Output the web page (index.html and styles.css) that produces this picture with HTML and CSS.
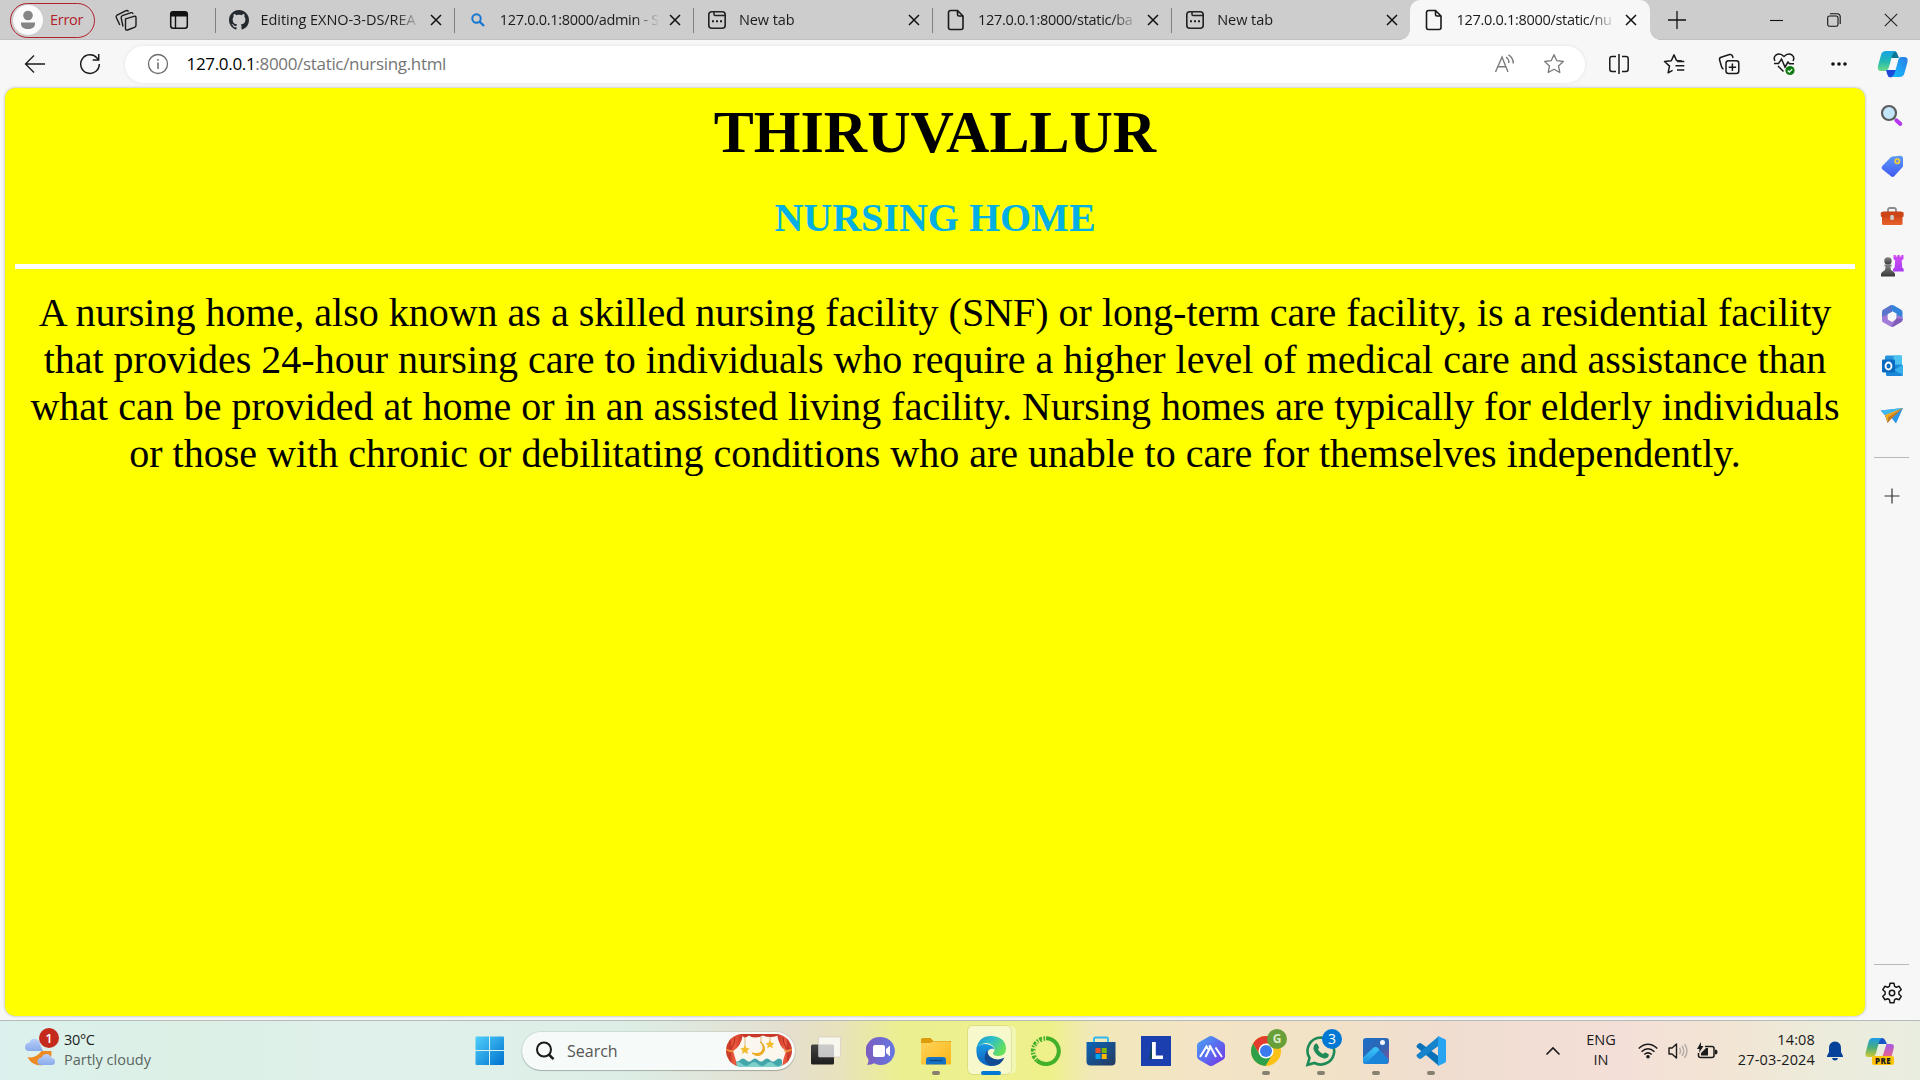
FILE: index.html
```html
<!DOCTYPE html>
<html lang="en">
<head>
<meta charset="utf-8">
<title>127.0.0.1:8000/static/nursing.html</title>
<link rel="stylesheet" href="styles.css">
</head>
<body>
<svg class="defs" width="0" height="0" aria-hidden="true">
  <defs>
    <linearGradient id="cpA" x1="0" y1="0" x2="0" y2="1"><stop offset="0" stop-color="#14a4e4"/><stop offset=".55" stop-color="#25b9b0"/><stop offset="1" stop-color="#6fdc86"/></linearGradient>
    <linearGradient id="cpB" x1="1" y1="0" x2="0" y2="1"><stop offset="0" stop-color="#2b7be0"/><stop offset=".5" stop-color="#1ea0f4"/><stop offset="1" stop-color="#15bdf8"/></linearGradient>
    <linearGradient id="cpC" x1="0" y1="0" x2="0" y2="1"><stop offset="0" stop-color="#1c9ae8"/><stop offset=".5" stop-color="#49ad7c"/><stop offset="1" stop-color="#d2ca32"/></linearGradient>
    <linearGradient id="cpD" x1="0" y1="0" x2="0" y2="1"><stop offset="0" stop-color="#a45ae8"/><stop offset="1" stop-color="#f4647c"/></linearGradient>
    <linearGradient id="tag" x1="0" y1="0" x2="0" y2="1"><stop offset="0" stop-color="#5d9df5"/><stop offset="1" stop-color="#4058f4"/></linearGradient>
    <linearGradient id="box" x1="0" y1="0" x2="0" y2="1"><stop offset="0" stop-color="#c8380c"/><stop offset="1" stop-color="#e8622c"/></linearGradient>
    <linearGradient id="pawn" x1="0" y1="0" x2="0" y2="1"><stop offset="0" stop-color="#858585"/><stop offset="1" stop-color="#383838"/></linearGradient>
    <linearGradient id="rook" x1="0" y1="0" x2="0" y2="1"><stop offset="0" stop-color="#d24cf4"/><stop offset="1" stop-color="#a83cf4"/></linearGradient>
    <linearGradient id="win" x1="0" y1="0" x2="1" y2="1"><stop offset="0" stop-color="#4fd0fb"/><stop offset="1" stop-color="#0071cf"/></linearGradient>
    <linearGradient id="chat" x1="0" y1="0" x2="1" y2="0"><stop offset="0" stop-color="#7d5cc0"/><stop offset="1" stop-color="#6478e0"/></linearGradient>
    <linearGradient id="fold" x1="0" y1="0" x2="1" y2="1"><stop offset="0" stop-color="#ffd45c"/><stop offset="1" stop-color="#fbb616"/></linearGradient>
    <linearGradient id="edgeT" x1="0" y1="0" x2="1" y2=".5"><stop offset="0" stop-color="#1a96d4"/><stop offset=".5" stop-color="#2fbfc8"/><stop offset="1" stop-color="#66e05a"/></linearGradient>
    <linearGradient id="edgeB" x1="0" y1="0" x2="0" y2="1"><stop offset="0" stop-color="#1c9be4"/><stop offset="1" stop-color="#0a62bc"/></linearGradient>
    <linearGradient id="store" x1="0" y1="0" x2="1" y2="1"><stop offset="0" stop-color="#0b65b8"/><stop offset="1" stop-color="#26395e"/></linearGradient>
    <linearGradient id="hex" x1="0" y1="0" x2="1" y2="1"><stop offset="0" stop-color="#4aa4f4"/><stop offset=".5" stop-color="#5a6cf0"/><stop offset="1" stop-color="#7a30e4"/></linearGradient>
    <linearGradient id="photo" x1="0" y1="0" x2="1" y2="1"><stop offset="0" stop-color="#1a70c8"/><stop offset=".6" stop-color="#3464b0"/><stop offset="1" stop-color="#9a4c98"/></linearGradient>
    <linearGradient id="photoM" x1="0" y1="0" x2="0" y2="1"><stop offset="0" stop-color="#3cc8f8"/><stop offset="1" stop-color="#1c8ce0"/></linearGradient>
    <linearGradient id="cloud" x1="0" y1="0" x2="0" y2="1"><stop offset="0" stop-color="#bcd0f8"/><stop offset="1" stop-color="#88aaec"/></linearGradient>
    <linearGradient id="curt" x1="0" y1="0" x2="1" y2="0"><stop offset="0" stop-color="#c83424"/><stop offset=".5" stop-color="#ec5a40"/><stop offset="1" stop-color="#c83424"/></linearGradient>
    <linearGradient id="tvD" x1="0" y1="0" x2="0" y2="1"><stop offset="0" stop-color="#444"/><stop offset="1" stop-color="#1d1d1d"/></linearGradient>
    <symbol id="close" viewBox="0 0 12 12"><path d="M1 1l10 10M11 1L1 11" fill="none" stroke="#111" stroke-width="1.5"/></symbol>
    <symbol id="page" viewBox="0 0 18 22"><path d="M3.5 1.5h7l5.500 5.500v11.500a2 2 0 0 1-2 2H3.500a2 2 0 0 1-2-2v-15a2 2 0 0 1 2-2zM10.500 1.500v4a1.500 1.500 0 0 0 1.500 1.500h4" fill="none" stroke="#1a1a1a" stroke-width="1.6"/></symbol>
    <symbol id="newtab" viewBox="0 0 20 20"><rect x="1.800" y="1.800" width="16.400" height="16.400" rx="3" fill="none" stroke="#222" stroke-width="1.600"/><path d="M7 2v2.500a1 1 0 0 0 1 1h10" fill="none" stroke="#222" stroke-width="1.500"/><path d="M5 10.200h2v2H5zM9 10.200h2v2H9zM13 10.200h2v2h-2z" fill="#222"/></symbol>
  </defs>
</svg>
<div class="screen">
  <header class="tabstrip">
    <div class="profile"><span class="avatar"><svg width="16" height="20" viewBox="0 0 16 20"><circle cx="8" cy="5.500" r="4.800" fill="#858585"/><path d="M1 12.500h14v1.500c0 3-3 5-7 5s-7-2-7-5z" fill="#858585"/></svg></span><span>Error</span></div>
    <svg class="spaces" width="24" height="24" viewBox="0 0 24 24" fill="none" stroke="#1a1a1a" stroke-width="1.400" stroke-linejoin="round"><path d="M11.500 10.800l8.500-2.500q2-.5 2 1.500v7.500q0 1.500-1.500 2l-7 2.700q-2 .6-2-1.500z"/><path d="M9 18.500L7.200 9.800q-.3-1.600 1.200-2.200L17 4.700q1.500-.5 2 1.300"/><path d="M5.800 17L2.300 9.500q-.7-1.600.8-2.400L12 2.700q1.500-.7 2.500.8"/></svg>
    <svg class="actions" width="24" height="24" viewBox="0 0 24 24"><rect x="3.700" y="3.700" width="16.600" height="16.600" rx="2.500" fill="none" stroke="#111" stroke-width="1.500"/><path d="M3.500 8.500V5.500q0-2 2-2h13q2 0 2 2v3zM7.800 8h1.400v12H7.800z" fill="#111"/></svg>
    <nav class="tabs">
      <div class="tab"><span class="fav"><svg width="20" height="20" viewBox="0 0 16 16"><path fill="#24292f" d="M8 0C3.580 0 0 3.580 0 8c0 3.540 2.290 6.530 5.470 7.590.4.070.55-.17.55-.38 0-.19-.01-.82-.01-1.490-2.010.37-2.530-.49-2.690-.94-.09-.23-.48-.94-.82-1.130-.28-.15-.68-.52-.01-.53.63-.01 1.080.58 1.230.82.720 1.210 1.870.87 2.330.66.070-.52.280-.87.510-1.070-1.780-.2-3.640-.89-3.640-3.950 0-.87.310-1.590.820-2.150-.08-.2-.36-1.020.080-2.120 0 0 .67-.21 2.200.82.640-.18 1.320-.27 2-.27s1.360.09 2 .27c1.530-1.040 2.200-.82 2.200-.82.440 1.100.160 1.920.080 2.120.510.560.820 1.270.820 2.150 0 3.070-1.870 3.750-3.650 3.950.290.250.540.730.540 1.480 0 1.070-.01 1.930-.01 2.200 0 .21.150.46.550.38A8.010 8.010 0 0 0 16 8c0-4.420-3.580-8-8-8z"/></svg></span><span class="label wide">Editing EXNO-3-DS/REA</span><svg class="x" width="12" height="12"><use href="#close"/></svg></div>
      <div class="tab"><span class="fav"><svg width="14" height="14" viewBox="0 0 14 14" fill="none" stroke="#1677d2"><circle cx="5.500" cy="5.500" r="4.200" stroke-width="2"/><path d="M8.500 8.500l4.500 4.500" stroke-width="2.400"/></svg></span><span class="label">127.0.0.1:8000/admin - S</span><svg class="x" width="12" height="12"><use href="#close"/></svg></div>
      <div class="tab"><span class="fav"><svg width="20" height="20"><use href="#newtab"/></svg></span><span class="label wide">New tab</span><svg class="x" width="12" height="12"><use href="#close"/></svg></div>
      <div class="tab"><span class="fav"><svg width="18" height="22"><use href="#page"/></svg></span><span class="label">127.0.0.1:8000/static/ba</span><svg class="x" width="12" height="12"><use href="#close"/></svg></div>
      <div class="tab"><span class="fav"><svg width="20" height="20"><use href="#newtab"/></svg></span><span class="label wide">New tab</span><svg class="x" width="12" height="12"><use href="#close"/></svg></div>
      <div class="tab active"><span class="fav"><svg width="18" height="22"><use href="#page"/></svg></span><span class="label">127.0.0.1:8000/static/nu</span><svg class="x" width="12" height="12"><use href="#close"/></svg></div>
    </nav>
    <span class="plus"><svg width="18" height="18" viewBox="0 0 18 18" stroke="#111" stroke-width="1.300"><path d="M9 0v18M0 9h18"/></svg></span>
    <div class="controls">
      <span><svg width="14" height="14" viewBox="0 0 14 14"><path d="M0 7.500h13" stroke="#111" stroke-width="1.100"/></svg></span>
      <span><svg width="14" height="14" viewBox="0 0 14 14" fill="none" stroke="#111" stroke-width="1.100"><rect x=".7" y="3" width="10.300" height="10.300" rx="1.800"/><path d="M3 .8h7q3.200 0 3.200 3.200v7"/></svg></span>
      <span><svg width="14" height="14" viewBox="0 0 14 14" stroke="#222" stroke-width="1.100"><path d="M.8.800l12.400 12.400M13.200.800L.8 13.200"/></svg></span>
    </div>
  </header>

  <div class="toolbar">
    <svg class="back" width="24" height="24" viewBox="0 0 24 24" fill="none" stroke="#1a1a1a" stroke-width="1.300"><path d="M22 12H2.500M11 3.500L2.500 12l8.500 8.500"/></svg>
    <svg class="reload" width="24" height="24" viewBox="0 0 24 24" fill="none" stroke="#1a1a1a" stroke-width="1.500"><path d="M21.300 12A9.300 9.300 0 1 1 19 6l1.500 1.500M20.700 2v6h-6"/></svg>
    <div class="address">
      <svg width="22" height="22" viewBox="0 0 22 22" fill="none" stroke="#6c6c6c" stroke-width="1.300"><circle cx="11" cy="11" r="9.500"/><path d="M11 9.500v6.500M11 6v1.800" stroke-width="1.500"/></svg>
      <span class="url"><b>127.0.0.1</b>:8000/static/nursing.html</span>
      <svg class="read" width="22" height="20" viewBox="0 0 22 20" fill="none" stroke="#7a7a7a" stroke-width="1.400"><path d="M1.500 18L8 3l6 15M3.800 12.800h8.200M12 3q3 2 3 6M14.500 .8q4.800 3 4.800 8.700"/></svg>
      <svg class="star" width="22" height="22" viewBox="0 0 22 22" fill="none" stroke="#7a7a7a" stroke-width="1.300" stroke-linejoin="round"><path d="M11 1.700l2.800 6 6.500.8-4.800 4.500 1.300 6.500L11 16.300l-5.800 3.200 1.300-6.500L1.700 8.500l6.500-.8z"/></svg>
    </div>
    <div class="tools">
      <span><svg width="22" height="22" viewBox="0 0 22 22" fill="none" stroke="#1a1a1a" stroke-width="1.500"><path d="M8 3.500H4q-2.200 0-2.200 2.200v10.600q0 2.200 2.200 2.200h4M14 3.500h4q2.200 0 2.200 2.200v10.600q0 2.200-2.200 2.200h-4M11 1v20"/></svg></span>
      <span><svg width="22" height="22" viewBox="0 0 22 22" fill="none" stroke="#1a1a1a" stroke-width="1.500" stroke-linejoin="round"><path d="M19 8l-5.500-.5L11 1.900 8.300 7.700l-6.800.8 5 4.600-1.400 6.700 4.500-2.500M14 8.500h7.300M12.500 12.800h8.800M14 17h7.300"/></svg></span>
      <span><svg width="22" height="22" viewBox="0 0 22 22" fill="none" stroke="#1a1a1a" stroke-width="1.500"><rect x="8" y="7.800" width="12.800" height="12.800" rx="2.500"/><path d="M14.400 10.500v7.400M10.700 14.200h7.400M5.500 16q-1.500-.5-2-2.500L1.600 7q-.5-2.200 1.500-2.800L11.500 1.500q2.200-.5 3 1.500l.5 2"/></svg></span>
      <span><svg width="22" height="24" viewBox="0 0 22 24" fill="none" stroke="#1a1a1a" stroke-width="1.500"><path d="M2 9Q0 5.500 3 3q4-2.500 8 1.500 4-4 8-1.500 3 2.500 1 6M1 11.500h4.500L8.500 7l3.500 8 3-5 1.500 1.800h4.500M5 14l5.500 5.500"/><circle cx="17" cy="18.500" r="4.600" fill="#107c10" stroke="none"/><path d="M14.800 18.500l1.600 1.600 2.800-2.900" stroke="#fff" stroke-width="1.200"/></svg></span>
      <span><svg width="18" height="6" viewBox="0 0 18 6" fill="#111"><circle cx="3" cy="3" r="1.800"/><circle cx="9" cy="3" r="1.800"/><circle cx="15" cy="3" r="1.800"/></svg></span>
      <span class="copilot"><svg width="32" height="28" viewBox="0 0 32 28"><path d="M13 8h9l-2-5q-1-2-3-2H9z" fill="#0d7896"/><path d="M9 1h10q-3 1-4 5l-3 11q-1 4-5 4H4q-4 0-3-5L4 5q1-4 5-4z" fill="url(#cpA)"/><path d="M9 20h11l-3 6.500q-1 .8-2 .8H13q-2 0-2.800-3z" fill="#1b49d8"/><path d="M24 7h3q4.500 0 3.500 5l-3 11q-1 4-5 4H14q3-1 4-5l3-11q1-4 3-4z" fill="url(#cpB)"/></svg></span>
    </div>
  </div>

  <div class="middle">
    <main class="page">
      <h1>THIRUVALLUR</h1>
      <h2>NURSING HOME</h2>
      <hr>
      <p>A nursing home, also known as a skilled nursing facility (SNF) or long-term care facility, is a residential facility that provides 24-hour nursing care to individuals who require a higher level of medical care and assistance than what can be provided at home or in an assisted living facility. Nursing homes are typically for elderly individuals or those with chronic or debilitating conditions who are unable to care for themselves independently.</p>
    </main>
    <aside class="side">
      <svg width="24" height="24" viewBox="0 0 24 24"><path d="M14 14l7 6" stroke="#b4b4b4" stroke-width="3"/><path d="M16.500 16.500l3.800 3.500" stroke="#b838f0" stroke-width="4" stroke-linecap="round"/><circle cx="9" cy="9" r="7" fill="#c4e6fa" stroke="#5c5c5c" stroke-width="2.200"/></svg>
      <svg width="24" height="24" viewBox="0 0 24 24"><path d="M12.500 2.500l7.500-.8q3-.2 3 2.500v7.500q0 1-.8 1.800l-8 8.800q-1.700 1.500-3.200 0L2 15q-1-1.500.3-3L10 4q1-1.300 2.500-1.500z" fill="url(#tag)"/><circle cx="17.300" cy="7.300" r="2.200" fill="#7c8ce0" stroke="#fbd22c" stroke-width="1.500"/></svg>
      <svg width="24" height="24" viewBox="0 0 24 24"><path d="M8 8V6q0-2 2-2h4q2 0 2 2v2" fill="none" stroke="#8c8c90" stroke-width="1.800"/><rect x="2" y="7.500" width="20.500" height="13.500" rx="1.500" fill="url(#box)"/><rect x=".8" y="8" width="22.800" height="5" rx="1" fill="#cb4516"/><rect x="10.300" y="11" width="3.600" height="5" rx="1.200" fill="#cfc8c8"/></svg>
      <svg width="24" height="24" viewBox="0 0 24 24"><path d="M13.500 1h2.200v1.500h1.600V1h2.400v1.500h1.600V1h2.200v4l-1.800 1.500.5 7 1.500 1.500v2.500H13l0-2.500 1.600-1.500.6-7L13.500 5z" fill="url(#rook)"/><circle cx="8" cy="7" r="3.700" fill="url(#pawn)"/><path d="M4.500 10.500h7v2h-1.200q0 3.500 2.700 5 2 1 2 2.500v2.500H1V20q0-1.500 2-2.500 2.700-1.500 2.700-5H4.500z" fill="url(#pawn)"/></svg>
      <svg width="24" height="24" viewBox="0 0 24 24"><path d="M10.500 1.300q1.500-.8 3 0l7.700 4.500q1.300.8 1.300 2.300v8L16.500 14V9.500L11 6.500 7.500 9z" fill="#3484dc"/><path d="M2 13.500V8q0-1.500 1-2.200L10.500 1.300 12 3v5l-4.500 3v6z" fill="#5a74cc"/><path d="M2 13v3.500q0 1 1 1.700l7.500 4.200q1.500.8 3 0l7.300-4.200q1.500-1 1.700-2.700v-2.500L16.500 11v4l-4.500 3-4.500-2.500v-5z" fill="#a47ad8"/><path d="M22.500 15v1q0 1.500-1.700 2.200l-7.300 4.200q-1 .5-2 .2L16.500 14z" fill="#7f5cba"/><path d="M12 8l4.200 2.200v4.200L12 16.500l-4.200-2.300V10z" fill="#f7f7f7"/></svg>
      <svg width="24" height="24" viewBox="0 0 24 24"><rect x="5" y="1.500" width="17" height="15" rx="1.500" fill="#2594dc"/><path d="M13.500 1.500H22v9h-8.500z" fill="#4cc2f0"/><path d="M6 12l17-1v9.500q0 1.500-1.500 1.500h-14Q6 22 6 20.500z" fill="#1b87d8"/><path d="M23 10.500v10.500L14 16z" fill="#38b0ec"/><rect x="2" y="5.500" width="13" height="13" rx="1.200" fill="#0a6ac0"/><ellipse cx="8.500" cy="12" rx="3" ry="3.500" fill="none" stroke="#fff" stroke-width="1.800"/></svg>
      <svg width="24" height="24" viewBox="0 0 24 24"><path d="M.8 6.500L23 4l-7 15.500-4.500-5.500L7.500 19 5 11.500z" fill="#2c96ea"/><path d="M.8 6.500L23 4 6 11.500z" fill="#42b8ec"/><path d="M23 4L5 11l2.500 8 1-6z" fill="#f7a91c"/><path d="M23 4L8.500 13l-1 6 4-4.500z" fill="#cf7c18"/></svg>
      <i class="rule"></i>
      <svg class="add" width="16" height="16" viewBox="0 0 16 16" stroke="#333" stroke-width="1.200"><path d="M8 .5v15M.5 8h15"/></svg>
      <i class="rule low"></i>
      <svg class="gear" width="22" height="22" viewBox="0 0 22 22" fill="none" stroke="#161616" stroke-width="1.500" stroke-linejoin="round"><path d="M9 1.300h4l.6 3 1.700 1 2.900-1 2 3.400-2.300 2.100v2.400l2.300 2.100-2 3.400-2.900-1-1.700 1-.6 3H9l-.6-3-1.700-1-2.900 1-2-3.400 2.300-2.100V9.800L1.800 7.700l2-3.400 2.900 1 1.700-1z"/><circle cx="11" cy="11" r="2.700"/></svg>
    </aside>
  </div>

  <footer class="taskbar">
    <div class="weather">
      <svg width="36" height="38" viewBox="0 0 36 38"><path d="M4 20q-4 0-4-4t4.500-4.500Q6 7 10 8q4 0 5 5l3 7z" fill="url(#cloud)"/><path d="M2.500 26q8 2 14-6h10q1 12-8 14-11 2-16-8z" fill="#ee8a24"/><path d="M16.500 34q-4 0-4-3.500t4-4q1.500-3.500 5-3.500t5 4q3.500 0 3.500 3.500T26.500 34z" fill="url(#cloud)"/></svg>
      <b class="alert">1</b>
      <div class="wtext"><span>30°C</span><span class="dim">Partly cloudy</span></div>
    </div>
    <svg class="start" width="30" height="30" viewBox="0 0 30 30" fill="url(#win)"><path d="M1.500.500h12.500V14H.500V1.500q0-1 1-1zM15 .5h13q1 0 1 1V14H15zM.5 15H14v14H1.500q-1 0-1-1zM15 15h14v13q0 1-1 1H15z"/></svg>
    <div class="search">
      <svg width="20" height="20" viewBox="0 0 20 20" fill="none" stroke="#1b1b1b" stroke-width="2"><circle cx="9" cy="8.500" r="7"/><path d="M13.800 13.500l4.700 4.700" stroke-width="2.500"/></svg>
      <span>Search</span>
      <svg class="scene" width="66" height="33" viewBox="0 0 66 33"><rect width="66" height="33" fill="#fbf7ef"/><path d="M8 26q3 3 6 0t6 0 6 0 6 0 6 0 6 0 6 0 6 0v8H8z" fill="#43a6aa"/><path d="M8 30q4-4 8 0t8 0 8 0 8 0 8 0 8 0v4H8z" fill="#7fcfcb"/><path d="M19 3v10M35 3v6M44 3v4" stroke="#d4a860" stroke-width=".8"/><path d="M34 8q5 4 2 9-3 4-10 2 5 4.500 10 1 4-3 2-8-1.500-3.500-4-4z" fill="#f0b428" stroke="#e8a820"/><path d="M19 11l1.500 3 3.200.4-2.400 2.200.7 3.300-3-1.700-3 1.700.7-3.300-2.400-2.200 3.200-.4zM44 6l1.400 2.800 3 .4-2.200 2 .6 3-2.800-1.500-2.800 1.500.6-3-2.200-2 3-.4z" fill="#f4bc2c"/><path d="M0 0h17q-2 13-10 17 3 8 4 16H0z" fill="url(#curt)"/><path d="M66 0H51q2 13 9 17-3 8-4 16h10z" fill="url(#curt)"/><path d="M15 0h38q-2 3-8 3-5 0-8-1.500-3 2-8 2-4 0-6-2-2 2-5 2z" fill="#c93826"/><path d="M4 3v12M9 3q0 7-4 12M57 3q0 7 4 12M62 3v12M4 19v13M62 19v13" stroke="#b02c1e" fill="none"/><path d="M0 15.500q5 3 8 1M66 15.500q-5 3-8 1" stroke="#f0a040" stroke-width="1.500" fill="none"/></svg>
    </div>
    <div class="apps">
      <span><svg width="32" height="32" viewBox="0 0 32 32"><rect x="1" y="9.500" width="23" height="20" rx="1.500" fill="url(#tvD)"/><rect x="8.500" y="2" width="22" height="20" rx="1" fill="#fff" fill-opacity=".72" stroke="#d0c8c4" stroke-width=".6"/></svg></span>
      <span><svg width="30" height="30" viewBox="0 0 30 30"><path d="M15 1a14 14 0 1 1-7 26.200q-3 1.800-7 1.500 2-2 1.300-5.500A14 14 0 0 1 15 1z" fill="url(#chat)"/><rect x="7" y="9" width="12" height="12" rx="2" fill="#fff"/><path d="M20 13l3.500-3q.5-.2.500.5v9q0 .7-.5.500l-3.500-3z" fill="#fff"/></svg></span>
      <span class="run"><svg width="32" height="30" viewBox="0 0 32 30"><path d="M1 6V3.500Q1 2 2.500 2h8l3 3H31v6H1z" fill="#dc9c0c"/><path d="M1 7h9l3.500-1.500H29.500Q31 5.500 31 7v20.500q0 1-1 1H2q-1 0-1-1z" fill="url(#fold)"/><path d="M6 28.500V24q0-3 3-3h14q3 0 3 3v4.500z" fill="#1473c4"/><path d="M9.500 24.500h13" stroke="#0c4a84" stroke-width="1.500"/></svg></span>
      <span class="run current"><svg width="32" height="32" viewBox="0 0 32 32"><path d="M1.500 13Q4 1 16 1q14 .5 15 12 0 8-8 8-5 0-5-3 3-3 0-7-7-7-16.500 2z" fill="url(#edgeT)"/><path d="M1.500 12.500Q7 7 15 10q4 2 4 4-6-1-7 5 0 8 8 9 4 .5 7-1-5 4.500-12 4Q0 29 1.500 12.500z" fill="url(#edgeB)"/><path d="M12.500 14.500q-7 11 3.500 16.300Q26 31 29.500 22.500q-8 4-14-.5-3.500-3-3-7.500z" fill="#124a94"/></svg></span>
      <span><svg width="32" height="32" viewBox="0 0 32 32" fill="none"><path d="M16 3.200A12.900 12.900 0 1 1 7 25.500" stroke="#43b02a" stroke-width="4"/><path d="M15 3.500A12.800 12.800 0 0 0 7.500 26" stroke="#43b02a" stroke-width="4.500" stroke-dasharray="1.500 1.300 3 1.100"/><path d="M13 5A12 12 0 0 0 7 24" stroke="#f0ee96" stroke-width="1.400" stroke-dasharray="1.500 2"/></svg></span>
      <span><svg width="32" height="32" viewBox="0 0 32 32"><path d="M9 8V4q0-1.500 1.500-1.500h11Q23 2.500 23 4v4" fill="none" stroke="#30b8ee" stroke-width="1.800"/><path d="M1.500 7h29v19.500q0 4-4 4h-21q-4 0-4-4z" fill="url(#store)"/><path d="M10.500 13h5v5h-5z" fill="#f25022"/><path d="M16.700 13h5v5h-5z" fill="#7fba00"/><path d="M10.500 19h5v5h-5z" fill="#00a4ef"/><path d="M16.700 19h5v5h-5z" fill="#ffb900"/></svg></span>
      <span><svg width="30" height="30" viewBox="0 0 30 30"><path d="M0 0h30v30H0z" fill="#1c3fb0"/><path d="M11 6L8 24l4-2z" fill="#0c4650"/><path d="M11 6h3.800v13.500H22V23H11z" fill="#fff"/></svg></span>
      <span><svg width="30" height="32" viewBox="0 0 30 32"><path d="M13 1.500q2-1 4 0l10 5.800q2 1.200 2 3.200v11q0 2-2 3.200l-10 5.800q-2 1-4 0L3 24.700q-2-1.200-2-3.200v-11q0-2 2-3.200z" fill="url(#hex)"/><path d="M4 22l6.500-10.500 1.800 3M9.500 22l5-10 5.500 10M19.500 12.500L26 22M14.500 12l-1.500-1.500" fill="none" stroke="#fff" stroke-width="2"/></svg></span>
      <span class="run"><svg width="32" height="32" viewBox="0 0 32 32"><circle cx="16" cy="16" r="15" fill="#fbc116"/><path d="M3 8.500A15 15 0 0 1 29 8.500H16l-6.500 11z" fill="#e33b2e"/><path d="M3 8.500A15 15 0 0 0 15.500 31L22 20l-12.500-.500z" fill="#2da04a"/><circle cx="16" cy="16" r="7.500" fill="#fff"/><circle cx="16" cy="16" r="6" fill="#3a7cec"/></svg><b class="badge green">G</b></span>
      <span class="run"><svg width="32" height="32" viewBox="0 0 32 32"><path d="M16 2.500A13.500 13.500 0 1 1 9.500 28L2.500 29.800 4.500 23A13.500 13.500 0 0 1 16 2.500z" fill="none" stroke="#1d8a57" stroke-width="2.600"/><path d="M10 9q1.500-1.200 2.500.2l1.500 3q.2 1-1 2.300 2 3.500 5 4.600 1.500-2 2.300-1.600l3 1.400q1 .8.200 2.600-1.500 2.500-4.500 2-8-1.800-10.600-9.500Q8 11 10 9z" fill="#1d8a57"/></svg><b class="badge blue">3</b></span>
      <span class="run"><svg width="28" height="28" viewBox="0 0 28 28"><rect x="1" y="1" width="26" height="26" rx="3" fill="url(#photo)"/><path d="M1 20.500L11.500 10.800q2-1.500 4 0L26.500 22v2q0 3-3 3H4q-3 0-3-3z" fill="#1a84d8"/><path d="M1 20.500L11.500 10.800q2-1.500 4 0l2 2L4 26.800Q1 26.500 1 24z" fill="url(#photoM)"/><circle cx="20.500" cy="5.500" r="2.500" fill="#f4f8fc"/></svg></span>
      <span class="run"><svg width="32" height="32" viewBox="0 0 32 32"><path d="M3 9l2-1q1 0 2 1l17 12.500V31L1.500 12q-.5-1 1.500-3z" fill="#0a70b8"/><path d="M3 23l2 1q1 0 2-1L24 10.500V1L1.500 20q-.5 1 1.500 3z" fill="#1584cc"/><path d="M23 1l6.500 3q1.500.6 1.500 2v20q0 1.400-1.500 2L23 31z" fill="#28a4f0"/></svg></span>
    </div>
    <div class="tray">
      <svg class="chev" width="16" height="10" viewBox="0 0 16 10" fill="none" stroke="#1b1b1b" stroke-width="1.600"><path d="M1.500 8.500L8 2l6.500 6.500"/></svg>
      <div class="lang"><span>ENG</span><span>IN</span></div>
      <svg class="wifi" width="20" height="16" viewBox="0 0 20 16" fill="none" stroke="#1b1b1b" stroke-width="1.500"><path d="M.7 5.500q9.300-8.500 18.600 0M3.500 8.700q6.500-6 13 0M6.300 11.500q3.700-3.300 7.400 0"/><circle cx="10" cy="13.800" r="1.800" fill="#1b1b1b" stroke="none"/></svg>
      <svg class="vol" width="20" height="18" viewBox="0 0 20 18" fill="none" stroke="#1b1b1b" stroke-width="1.400"><path d="M1 6h3l4.500-4v14L4 12H1z" stroke-linejoin="round"/><path d="M11.500 6q2 3 0 6M14 4q3.500 5 0 10M16.500 2q5 7 0 14" stroke="#b4aca8"/></svg>
      <svg class="bat" width="21" height="18" viewBox="0 0 21 18"><path d="M8 4.500h7q2 0 2 2v7q0 2-2 2H3.500q-2 0-2-2V11" fill="none" stroke="#1b1b1b" stroke-width="1.500"/><path d="M4 11l5-5h2v7.500H4zM18 7.500q2.500 0 2.500 2.500T18 12.500zM4 0L0 7h2.500L2 11l4.500-7H4z" fill="#1b1b1b"/></svg>
      <div class="clock"><span>14:08</span><span>27-03-2024</span></div>
      <svg class="bell" width="18" height="20" viewBox="0 0 18 20" fill="#06429a"><path d="M9 .500q6 .5 6 6.500v4l2 4v1H1v-1l2-4V7Q3 1 9 .500zM6 17h6q-.5 2.500-3 2.500T6 17z"/></svg>
      <div class="pre"><svg width="30" height="28" viewBox="0 0 30 28"><path d="M13 7h9l-2-4q-1-2-3-2H9z" fill="#1b54c8"/><path d="M8 1h9q-2 1-3 4l-3 11q-1 4-4 4H3q-3 0-2.500-4L3.500 5Q4.500 1 8 1z" fill="url(#cpC)"/><path d="M22 7h4q3.500 0 2.800 4L27 18q-1 4-4 4h-8q2-1 3-4l2.500-8q.5-3 1.500-3z" fill="url(#cpD)"/></svg><b>PRE</b></div>
    </div>
  </footer>
</div>
</body>
</html>
```

FILE: styles.css
```css
* { box-sizing: border-box; }

body {
  margin: 0;
  font-family: "Open Sans", "Noto Sans", sans-serif;
  color: #1b1b1b;
}

svg { display: block; flex: none; }
.defs { position: absolute; }

.screen {
  width: 1920px;
  height: 1080px;
  display: flex;
  flex-direction: column;
  overflow: hidden;
  background: #f7f7f7;
}

/* Tab strip */
.tabstrip {
  height: 40px;
  flex: none;
  display: flex;
  align-items: center;
  padding-left: 10px;
  background: #cdcdcd;
  box-shadow: inset 0 -1px 0 #c2c2c2;
}

.profile {
  width: 85px;
  height: 35px;
  display: flex;
  align-items: center;
  gap: 7px;
  padding-left: 2px;
  border: 1.5px solid #b0222a;
  border-radius: 18px;
  color: #b0222a;
  font-size: 14.5px;
  letter-spacing: -0.3px;
  line-height: 20px;
}

.avatar {
  width: 30px;
  height: 30px;
  display: grid;
  place-items: center;
  border-radius: 50%;
  background: #fafafa;
}

.spaces { margin-left: 19px; }
.actions { margin-left: 29px; }

.tabs {
  display: grid;
  grid-template-columns: repeat(6, 239.2px);
  height: 40px;
  margin-left: 23.5px;
}

.tab {
  display: flex;
  align-items: center;
  padding-left: 10px;
  background: linear-gradient(#808080, #808080) 0 8px / 1.3px 25px no-repeat;
}

.tab.active {
  position: relative;
  height: 40px;
  border-radius: 10px 10px 0 0;
  background: #f7f7f7;
}

/* Flared feet of the selected tab */
.tab.active::before,
.tab.active::after {
  content: "";
  position: absolute;
  bottom: 0;
  width: 10px;
  height: 10px;
}
.tab.active::before { left: -10px; background: radial-gradient(circle at 0 0, transparent 9.5px, #f7f7f7 10px); }
.tab.active::after { right: -10px; background: radial-gradient(circle at 100% 0, transparent 9.5px, #f7f7f7 10px); }

.fav {
  width: 28px;
  display: grid;
  place-items: center;
}

.label {
  width: 158px;
  margin-left: 8px;
  white-space: nowrap;
  font-size: 14.5px;
  letter-spacing: -0.3px;
  line-height: 22px;
  -webkit-mask-image: linear-gradient(90deg, #000 134px, transparent 160px);
  mask-image: linear-gradient(90deg, #000 134px, transparent 160px);
}
.label.wide { letter-spacing: -0.05px; }

.x { margin-left: 11px; }

.plus {
  width: 54px;
  display: grid;
  place-items: center;
}

.controls {
  display: flex;
  margin-left: auto;
}
.controls span {
  width: 57.3px;
  display: grid;
  place-items: center;
}

/* Toolbar */
.toolbar {
  height: 48px;
  flex: none;
  display: flex;
  align-items: center;
  padding-left: 23px;
}

.reload { margin-left: 31px; }

.address {
  width: 1460px;
  height: 37px;
  margin-left: 23px;
  padding: 0 20px 0 21.5px;
  display: flex;
  align-items: center;
  border-radius: 19px;
  background: #fff;
  box-shadow: 0 0 4px rgba(0, 0, 0, 0.08);
}

.url {
  margin-left: 18px;
  padding-bottom: 2px;
  font-size: 17px;
  letter-spacing: -0.32px;
  color: #757575;
}
.url b { font-weight: 400; color: #000; }
.read { margin-left: auto; }
.star { margin-left: 27px; }

.tools { display: flex; margin-left: 6.5px; }
.tools span {
  width: 55px;
  height: 40px;
  display: grid;
  place-items: center;
}
.tools .copilot { width: 53px; }

/* Page and side rail */
.middle {
  height: 932px;
  flex: none;
  display: flex;
  padding: 0 0 4px 5px;
}

.page {
  width: 1860px;
  padding: 10px;
  border-radius: 10px;
  background: #ff0;
  box-shadow: 0 0 3px rgba(0, 0, 0, 0.3);
  font-family: "Liberation Serif", "Times New Roman", serif;
  color: #000;
  text-align: center;
}

.page h1 { margin: 0; font-size: 60px; line-height: 69px; }
.page h2 { margin: 28px 0 0; font-size: 40px; line-height: 46px; color: #00b0e4; }
.page hr { height: 5px; margin: 23px 0 0; border: 0; background: #fff; }
.page p { margin: 20px 0 0; font-size: 40px; line-height: 47px; }

.side {
  width: 53px;
  display: flex;
  flex-direction: column;
  align-items: center;
  gap: 26px;
  padding-top: 15.5px;
}

.rule { width: 35px; height: 1px; margin-top: 3px; background: #b8b8b8; }
.add { margin-top: 4px; }
.rule.low { margin-top: auto; }
.gear { margin: -9px 0 12px; }

/* Taskbar */
.taskbar {
  height: 60px;
  flex: none;
  display: flex;
  align-items: center;
  border-top: 1px solid #b4bcb8;
  background: linear-gradient(90deg, #dcf1ed 0, #dcf0e6 180px, #e0f1eb 400px, #dceee6 620px, #e4dfd0 780px, #e8e2bc 840px, #ecef90 900px, #eef18a 1050px, #f1e8b8 1090px, #f3e4c6 1200px, #f2e2c6 1320px, #f0ddd0 1440px, #f4dfd8 1620px, #f2e5d4 1730px, #ececdc 1830px, #e9ede0 1920px);
}

.weather {
  position: relative;
  width: 475px;
  display: flex;
  align-items: center;
  padding: 0 0 2px 25px;
}

.alert {
  position: absolute;
  left: 39px;
  top: -2px;
  width: 20px;
  height: 20px;
  border-radius: 50%;
  background: #c42b1c;
  color: #fff;
  font-size: 13px;
  font-weight: 600;
  line-height: 20px;
  text-align: center;
}

.wtext {
  display: flex;
  flex-direction: column;
  margin-left: 3px;
  font-size: 14.5px;
  line-height: 20px;
  letter-spacing: -0.35px;
}
.dim { color: #5b6561; letter-spacing: 0; }

.search {
  width: 273px;
  height: 38px;
  margin-left: 17px;
  padding: 0 3px 0 13px;
  display: flex;
  align-items: center;
  border-radius: 19px;
  background: #f6faf8;
  box-shadow: 0 0 0 1px rgba(0, 0, 0, 0.07), 0 1px 1px rgba(0, 0, 0, 0.2);
  font-size: 16px;
  letter-spacing: 0;
  color: #555;
}
.search span { margin-left: 12px; }
.scene { margin-left: auto; border-radius: 17px; }

.apps { display: flex; margin-left: 3.5px; }
.apps > span {
  position: relative;
  width: 55px;
  height: 59px;
  display: grid;
  place-items: center;
}

.run::after {
  content: "";
  position: absolute;
  left: 23.5px;
  bottom: 5px;
  width: 8px;
  height: 4px;
  border-radius: 2px;
  background: #86806f;
}

.run.current svg { position: relative; }
.run.current::before {
  content: "";
  position: absolute;
  left: 4px;
  top: 5px;
  width: 43px;
  height: 48px;
  border-radius: 5px;
  background: rgba(255, 255, 255, 0.55);
  box-shadow: 0 0 0 1px rgba(170, 170, 90, 0.25), 5px 0 0 rgba(255, 255, 255, 0.35);
}
.run.current::after { left: 17.5px; width: 20px; background: #0078d4; }

.badge {
  position: absolute;
  left: 28.5px;
  top: 8px;
  width: 20px;
  height: 20px;
  border-radius: 50%;
  font-size: 12px;
  line-height: 20px;
  text-align: center;
}
.green { background: #689f38; color: #dcebc8; }
.blue { background: #0078d4; color: #fff; font-size: 14px; font-weight: 400; }

.tray {
  display: flex;
  align-items: center;
  margin-left: auto;
  padding-right: 25px;
  font-size: 14.5px;
  line-height: 20px;
  letter-spacing: 0;
}
.lang, .clock { display: flex; flex-direction: column; padding-bottom: 2px; }
.lang { width: 40px; margin-left: 20px; align-items: center; }
.wifi { margin-left: 17px; }
.vol { margin-left: 10px; }
.bat { margin-left: 9px; }
.clock { width: 88px; margin-left: 9px; align-items: flex-end; white-space: nowrap; letter-spacing: 0.15px; }
.bell { margin-left: 11px; }

.pre { position: relative; width: 30px; margin-left: 21px; }
.pre b {
  position: absolute;
  left: 7px;
  top: 19px;
  width: 22px;
  height: 9px;
  border-radius: 2px;
  background: #fcc40c;
  font-size: 8px;
  font-weight: 800;
  line-height: 9px;
  letter-spacing: 0.3px;
  text-align: center;
}
```
